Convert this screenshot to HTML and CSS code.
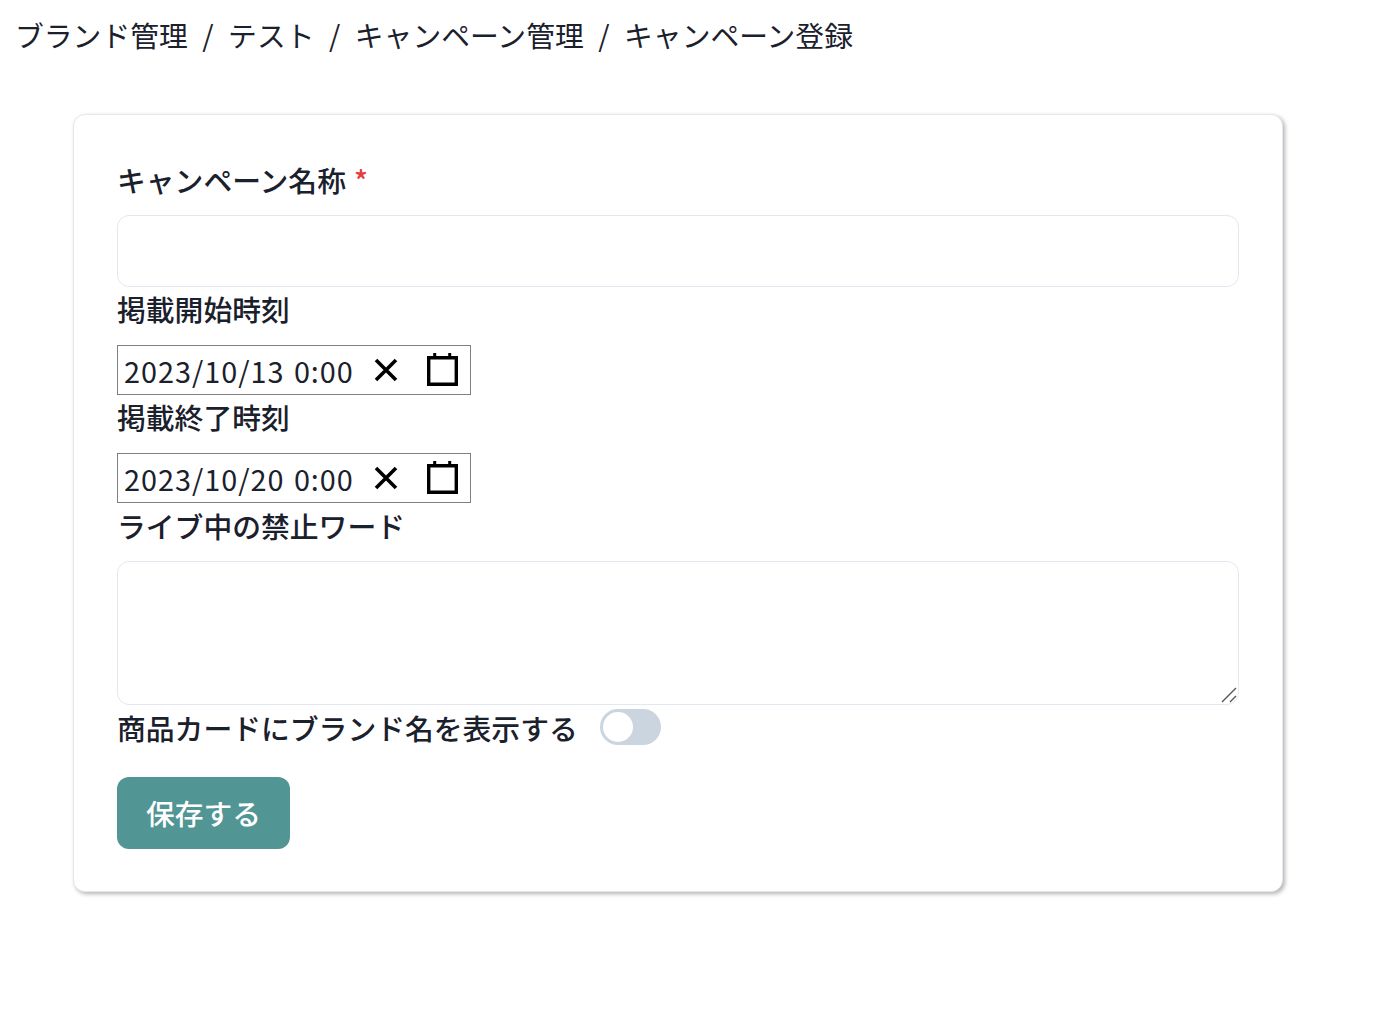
FILE: index.html
```html
<!DOCTYPE html>
<html lang="ja">
<head>
    <meta charset="UTF-8">
    <meta name="viewport" content="width=device-width, initial-scale=1.0">
    <title>キャンペーン登録</title>
    <link rel="stylesheet" href="styles.css">
</head>
<body>
    <nav class="breadcrumb">
        <span>ブランド管理</span>
        <span class="sep">/</span>
        <span>テスト</span>
        <span class="sep">/</span>
        <span>キャンペーン管理</span>
        <span class="sep">/</span>
        <span>キャンペーン登録</span>
    </nav>

    <form class="card">
        <label class="label label-first">キャンペーン名称<span class="required">*</span></label>
        <input class="text-input" type="text">

        <label class="label">掲載開始時刻</label>
        <div class="date-input">
            <span class="date-value">2023/10/13 0:00</span>
            <svg class="icon-clear" viewBox="0 0 24 24"><path d="M2 2 L22 22 M22 2 L2 22"/></svg>
            <svg class="icon-calendar" viewBox="0 0 31 33"><path class="cal-box" d="M1.7 4.7 H29.3 V31.3 H1.7 Z"/><path class="cal-pin" d="M7.7 0 V5 M22.7 0 V5"/></svg>
        </div>

        <label class="label">掲載終了時刻</label>
        <div class="date-input">
            <span class="date-value">2023/10/20 0:00</span>
            <svg class="icon-clear" viewBox="0 0 24 24"><path d="M2 2 L22 22 M22 2 L2 22"/></svg>
            <svg class="icon-calendar" viewBox="0 0 31 33"><path class="cal-box" d="M1.7 4.7 H29.3 V31.3 H1.7 Z"/><path class="cal-pin" d="M7.7 0 V5 M22.7 0 V5"/></svg>
        </div>

        <label class="label label-low">ライブ中の禁止ワード</label>
        <div class="textarea-wrap">
            <textarea class="text-area"></textarea>
            <svg class="resizer" viewBox="0 0 16 16"><path d="M1 15 L15 1 M9 15 L15 9"/></svg>
        </div>

        <div class="toggle-row">
            <span class="toggle-label">商品カードにブランド名を表示する</span>
            <span class="toggle"><span class="knob"></span></span>
        </div>

        <button class="btn" type="button">保存する</button>
    </form>
</body>
</html>
```

FILE: styles.css
```css
* {
    box-sizing: border-box;
}
html, body {
    min-height: 100%;
}
body {
    margin: 0;
    padding-bottom: 40px;
    font-family: "Noto Sans CJK JP", "Noto Sans", sans-serif;
    font-size: 28.8px;
    line-height: 1.5;
    color: #1a202c;
    background-color: #fff;
}
.breadcrumb {
    display: flex;
    padding: 13px 15px 0;
    height: 114px;
}
.sep {
    padding: 0 14.5px;
}
.card {
    width: 1210px;
    margin-left: 73px;
    padding: 43px 43px 42px;
    background-color: #fff;
    border: 1px solid #e2e8f0;
    border-radius: 12px;
    box-shadow: 2px 2px 4px rgba(0, 0, 0, 0.3);
}
.label {
    display: block;
    height: 43px;
    margin-bottom: 15px;
    font-weight: 500;
}
.label-first {
    margin-bottom: 14px;
}
.label-low {
    padding-top: 1px;
}
.required {
    margin-left: 8px;
    color: #e53e3e;
}
.text-input {
    display: block;
    width: 100%;
    height: 72px;
    border: 1px solid #e2e8f0;
    border-radius: 12px;
    background-color: #fff;
}
.date-input {
    display: flex;
    align-items: center;
    width: 354px;
    height: 50px;
    padding: 0 12px 0 6px;
    border: 1px solid #808080;
}
.date-value {
    flex: 1;
    padding-top: 2px;
    letter-spacing: 1px;
    word-spacing: 2px;
    white-space: nowrap;
}
.icon-clear {
    width: 24px;
    height: 24px;
    margin-right: 29px;
}
.icon-clear path {
    fill: none;
    stroke: #000;
    stroke-width: 3.6;
}
.icon-calendar {
    width: 31px;
    height: 33px;
    margin-top: -2px;
}
.cal-box {
    fill: none;
    stroke: #000;
    stroke-width: 3.4;
}
.cal-pin {
    fill: none;
    stroke: #000;
    stroke-width: 3;
}
.textarea-wrap {
    position: relative;
    height: 144px;
}
.text-area {
    display: block;
    width: 100%;
    height: 100%;
    border: 1px solid #e2e8f0;
    border-radius: 12px;
    background-color: #fff;
    resize: none;
}
.resizer {
    position: absolute;
    right: 2px;
    bottom: 2px;
    width: 16px;
    height: 16px;
}
.resizer path {
    fill: none;
    stroke: #555;
    stroke-width: 1.4;
}
.toggle-row {
    display: flex;
    align-items: center;
    height: 44px;
    margin-bottom: 28px;
}
.toggle-label {
    padding-top: 1px;
    font-weight: 500;
}
.toggle {
    display: flex;
    align-items: center;
    width: 61px;
    height: 36px;
    margin-left: 22px;
    padding: 3px;
    border-radius: 18px;
    background-color: #cbd5e0;
}
.knob {
    width: 30px;
    height: 30px;
    border-radius: 50%;
    background-color: #fff;
}
.btn {
    display: block;
    width: 173px;
    height: 72px;
    padding: 0;
    border: none;
    border-radius: 12px;
    font: inherit;
    font-weight: 500;
    color: #fff;
    background-color: #519594;
    cursor: pointer;
}
```
